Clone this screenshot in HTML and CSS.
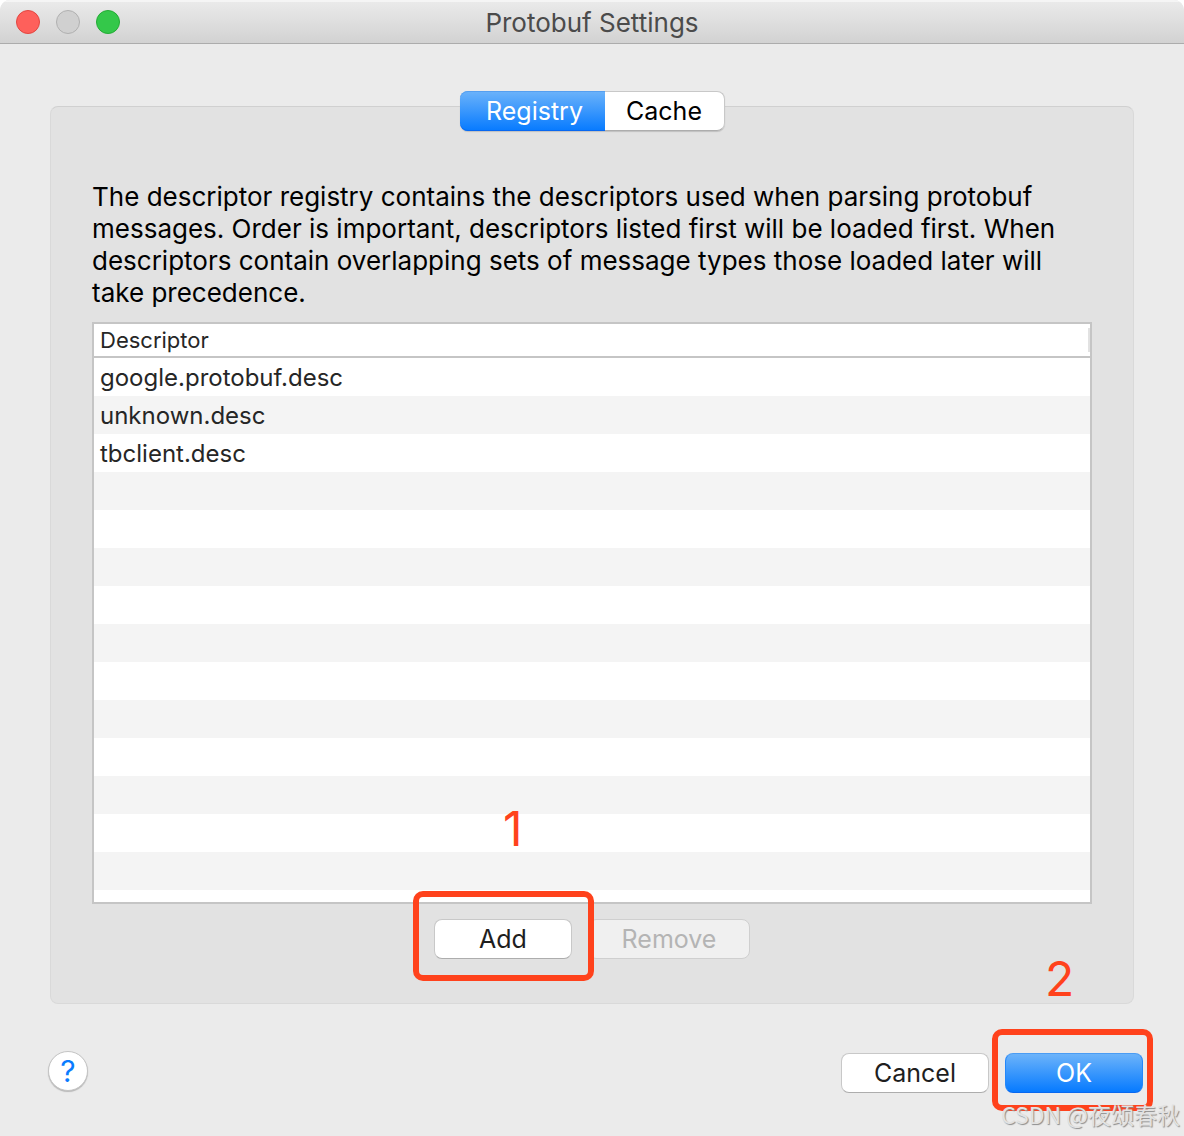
FILE: index.html
```html
<!DOCTYPE html>
<html lang="en">
<head>
<meta charset="utf-8">
<title>Protobuf Settings</title>
<meta name="viewport" content="width=device-width, initial-scale=1">
<link rel="stylesheet" href="styles.css">
</head>
<body>
<div class="window">
  <header class="titlebar">
    <div class="lights">
      <button class="light light-close" type="button" aria-label="Close"></button>
      <button class="light light-minimize" type="button" aria-label="Minimize" disabled></button>
      <button class="light light-zoom" type="button" aria-label="Zoom"></button>
    </div>
    <h1 class="title">Protobuf Settings</h1>
  </header>

  <main class="content">
    <div class="tabs" role="tablist">
      <button class="tab tab-active" type="button" role="tab" aria-selected="true" aria-controls="registry">Registry</button>
      <button class="tab" type="button" role="tab" aria-selected="false">Cache</button>
    </div>

    <section class="panel" id="registry" role="tabpanel">
      <p class="intro">The descriptor registry contains the descriptors used when parsing protobuf messages. Order is important, descriptors listed first will be loaded first. When descriptors contain overlapping sets of message types those loaded later will take precedence.</p>
      <div class="list">
        <table class="descriptors">
          <thead>
            <tr><th scope="col"><span class="column-label">Descriptor</span></th></tr>
          </thead>
          <tbody>
            <tr><td>google.protobuf.desc</td></tr>
            <tr><td>unknown.desc</td></tr>
            <tr><td>tbclient.desc</td></tr>
          </tbody>
        </table>
        <div class="empty-rows"></div>
      </div>
      <div class="list-actions">
        <div class="marked">
          <button class="button" type="button">Add</button>
          <span class="mark mark-add"></span>
          <span class="step step-add">1</span>
        </div>
        <button class="button button-remove" type="button" disabled>Remove</button>
      </div>
    </section>
  </main>

  <footer class="footer">
    <button class="help" type="button" aria-label="Help">?</button>
    <div class="footer-actions">
      <button class="button button-cancel" type="button">Cancel</button>
      <div class="marked">
        <button class="button button-primary" type="button">OK</button>
        <span class="mark mark-ok"></span>
        <span class="step step-ok">2</span>
      </div>
    </div>
  </footer>
  <span class="watermark">CSDN @夜颂春秋</span>
</div>
</body>
</html>
```
FILE: styles.css
```css
* {
  box-sizing: border-box;
}

body {
  margin: 0;
  background: #fff;
  color: #000;
  font-family: Inter, "Liberation Sans", sans-serif;
  font-size: 25px;
  line-height: 32px;
}

button {
  margin: 0;
  padding: 0;
  border: 0;
  font: inherit;
  color: inherit;
}

.window {
  position: relative;
  display: flex;
  flex-direction: column;
  min-height: 100vh;
  overflow: hidden;
  background: #ebebeb;
  border-radius: 10px 10px 0 0;
}

/* Title bar */
.titlebar {
  display: grid;
  grid-template-columns: 1fr auto 1fr;
  align-items: center;
  height: 44px;
  padding: 0 16px;
  background: linear-gradient(#ebebeb, #d2d2d2);
  border-bottom: 1px solid #acacac;
  box-shadow: inset 0 2px 0 #f5f5f5;
}

.lights {
  display: flex;
  gap: 16px;
}

.light {
  width: 24px;
  height: 24px;
  border: 1px solid;
  border-radius: 50%;
}

.light-close {
  background: #fe605b;
  border-color: #e24640;
}

.light-minimize {
  background: #d0d0d0;
  border-color: #b0b0b0;
}

.light-zoom {
  background: #34c84a;
  border-color: #24ab35;
}

.title {
  margin: 0;
  padding-top: 2px;
  color: #4b4b4b;
  font-size: 26px;
  font-weight: 400;
}

/* Tabs and panel */
.content {
  display: flex;
  flex: 1;
  flex-direction: column;
  padding: 47px 50px 0;
}

.tabs {
  z-index: 1;
  display: flex;
  align-self: center;
  height: 40px;
  margin-bottom: -25px;
  border-radius: 8px;
  box-shadow: 0 1px 1px #c0c0c0;
}

.tab {
  width: 120px;
  background: #fff;
  border: 1px solid #c8c8c8;
  border-left: 0;
  border-bottom-color: #adadad;
  border-radius: 0 8px 8px 0;
}

.tab-active {
  width: 145px;
  padding-left: 5px;
  background: linear-gradient(#6cb3fa, #067aff);
  border: 0;
  border-radius: 8px 0 0 8px;
  box-shadow: inset 0 1px 0 #559ff0, inset 0 -1px 0 #0868f0;
  color: #fff;
}

.panel {
  display: flex;
  flex: 1;
  flex-direction: column;
  padding: 74px 41px 44px;
  background: #e2e2e2;
  border: 1px solid #d9d9d9;
  border-top-color: #d0d0d0;
  border-radius: 8px;
}

.intro {
  margin: 0 0 13px;
  font-size: 26px;
}

/* Descriptor list */
.list {
  display: flex;
  flex: 1;
  flex-direction: column;
  background: #fff;
  border: 2px solid #c5c5c5;
}

.descriptors {
  width: 100%;
  border-spacing: 0;
  color: #262626;
  font-size: 24px;
}

.descriptors th {
  height: 34px;
  padding: 4px 0 4px 6px;
  border-bottom: 2px solid #c5c5c5;
  font-size: 22px;
  font-weight: 400;
  line-height: 24px;
  text-align: left;
}

.column-label {
  display: block;
  border-right: 2px solid #e2e2e2;
}

.descriptors td {
  height: 38px;
  padding: 2px 6px 0;
}

.descriptors tbody tr:nth-child(even) {
  background: #f4f4f4;
}

.empty-rows {
  flex: 1;
  background: repeating-linear-gradient(#f4f4f4 0 38px, #fff 38px 76px);
}

.list-actions {
  display: flex;
  justify-content: center;
  gap: 16px;
  padding-top: 15px;
}

/* Push buttons */
.button {
  display: block;
  width: 138px;
  height: 40px;
  background: #fff;
  border: 1px solid #c8c8c8;
  border-bottom-color: #adadad;
  border-radius: 8px;
  color: #1e1e1e;
}

.button-remove {
  width: 162px;
  background: #f0f0f0;
  border-color: #cfcfcf;
  color: #b4b4b4;
}

.button-cancel {
  width: 148px;
}

.button-primary {
  background: linear-gradient(#6cb3fa, #067aff);
  border-color: #4a9cf4 #2388fb #0868f0;
  color: #fff;
}

/* Numbered step marks */
.marked {
  position: relative;
  z-index: 1;
}

.mark {
  position: absolute;
  border: 6px solid #ff421c;
  border-radius: 10px;
  pointer-events: none;
}

.mark-add {
  inset: -28px -22px -22px -21px;
}

.mark-ok {
  inset: -24px -10px -18px -13px;
}

.step {
  position: absolute;
  color: #ff421c;
  font-size: 48px;
  line-height: 48px;
}

.step-add {
  bottom: 106px;
  left: 69px;
}

.step-ok {
  bottom: 90px;
  left: 40px;
}

/* Footer */
.footer {
  display: flex;
  align-items: center;
  justify-content: space-between;
  padding: 47px 41px 43px 48px;
}

.help {
  width: 40px;
  height: 40px;
  margin-bottom: 2px;
  background: #fff;
  border: 1px solid #c4c4c4;
  border-radius: 50%;
  box-shadow: 0 1px 1px #b8b8b8;
  color: #0a7cff;
  font-size: 30px;
}

.footer-actions {
  display: flex;
  gap: 16px;
  padding-top: 2px;
}

.watermark {
  position: absolute;
  z-index: 2;
  right: 4px;
  bottom: 6px;
  color: #e2e2e2;
  font-family: "Noto Sans CJK SC", sans-serif;
  font-size: 23px;
  text-shadow: 1px 1px 1px #8c8c8c;
}
```
